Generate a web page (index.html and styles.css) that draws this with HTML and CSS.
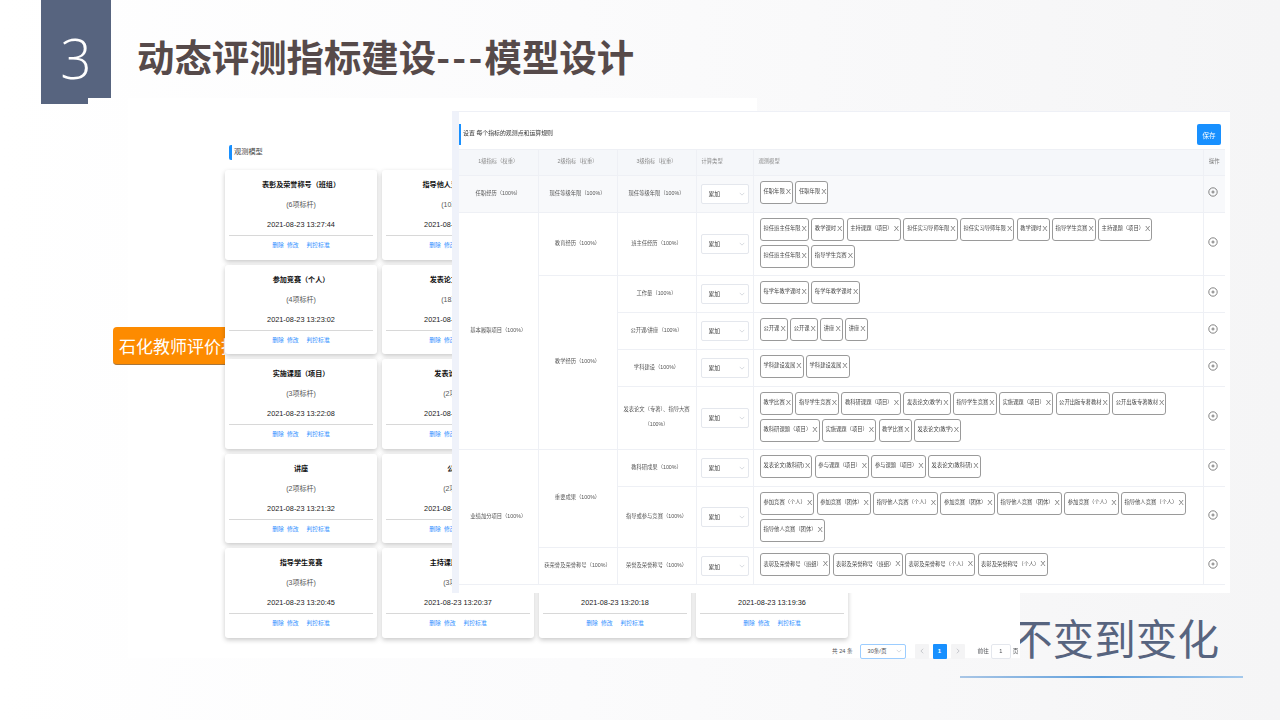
FILE: index.html
```html
<!DOCTYPE html>
<html lang="zh-CN">
<head>
<meta charset="utf-8">
<title>动态评测指标建设---模型设计</title>
<link rel="stylesheet" href="styles.css">
</head>
<body>
<main class="slide">
  <header class="slide-head">
    <div class="badge">3</div>
    <h1 class="slide-title">动态评测指标建设<span class="dashes">---</span>模型设计</h1>
  </header>

  <div class="caption">不变到变化</div>
  <div class="rule"></div>
  <div class="backdrop"></div>
  <div class="callout">石化教师评价指标</div>

  <section class="screen">
    <div class="screen-head">观测模型</div>
    <div class="cards">
      <article class="card"><h3>表彰及荣誉称号（班组）</h3><p class="num">(6项标杆)</p><p class="date">2021-08-23 13:27:44</p><div class="links"><a>删除</a><a>修改</a><a class="far">判控标准</a></div></article>
      <article class="card"><h3>指导他人竞赛（个人）</h3><p class="num">(10项标杆)</p><p class="date">2021-08-23 13:27:30</p><div class="links"><a>删除</a><a>修改</a><a class="far">判控标准</a></div></article>
      <article class="card"></article>
      <article class="card"></article>

      <article class="card"><h3>参加竞赛（个人）</h3><p class="num">(4项标杆)</p><p class="date">2021-08-23 13:23:02</p><div class="links"><a>删除</a><a>修改</a><a class="far">判控标准</a></div></article>
      <article class="card"><h3>发表论文（教学）</h3><p class="num">(18项标杆)</p><p class="date">2021-08-23 13:22:40</p><div class="links"><a>删除</a><a>修改</a><a class="far">判控标准</a></div></article>
      <article class="card"></article>
      <article class="card"></article>

      <article class="card"><h3>实施课题（项目）</h3><p class="num">(3项标杆)</p><p class="date">2021-08-23 13:22:08</p><div class="links"><a>删除</a><a>修改</a><a class="far">判控标准</a></div></article>
      <article class="card"><h3>发表论文(教学)</h3><p class="num">(2项标杆)</p><p class="date">2021-08-23 13:21:50</p><div class="links"><a>删除</a><a>修改</a><a class="far">判控标准</a></div></article>
      <article class="card"></article>
      <article class="card"></article>

      <article class="card"><h3>讲座</h3><p class="num">(2项标杆)</p><p class="date">2021-08-23 13:21:32</p><div class="links"><a>删除</a><a>修改</a><a class="far">判控标准</a></div></article>
      <article class="card"><h3>公开课</h3><p class="num">(2项标杆)</p><p class="date">2021-08-23 13:21:10</p><div class="links"><a>删除</a><a>修改</a><a class="far">判控标准</a></div></article>
      <article class="card"></article>
      <article class="card"></article>

      <article class="card"><h3>指导学生竞赛</h3><p class="num">(3项标杆)</p><p class="date">2021-08-23 13:20:45</p><div class="links"><a>删除</a><a>修改</a><a class="far">判控标准</a></div></article>
      <article class="card"><h3>主持课题（项目）</h3><p class="num">(3项标杆)</p><p class="date">2021-08-23 13:20:37</p><div class="links"><a>删除</a><a>修改</a><a class="far">判控标准</a></div></article>
      <article class="card"><h3>&nbsp;</h3><p class="num">&nbsp;</p><p class="date">2021-08-23 13:20:18</p><div class="links"><a>删除</a><a>修改</a><a class="far">判控标准</a></div></article>
      <article class="card"><h3>&nbsp;</h3><p class="num">&nbsp;</p><p class="date">2021-08-23 13:19:36</p><div class="links"><a>删除</a><a>修改</a><a class="far">判控标准</a></div></article>
    </div>
    <nav class="pager">
      <span class="total">共 24 条</span>
      <span class="size">30条/页<svg class="chev" viewBox="0 0 8 5"><path d="M1 1l3 3 3-3"/></svg></span>
      <span class="page-btn"><svg class="arrow" viewBox="0 0 5 8"><path d="M4 1L1 4l3 3"/></svg></span>
      <span class="page-btn current">1</span>
      <span class="page-btn"><svg class="arrow" viewBox="0 0 5 8"><path d="M1 1l3 3-3 3"/></svg></span>
      <span class="goto">前往</span>
      <span class="goto-input">1</span>
      <span class="goto-end">页</span>
    </nav>
  </section>

  <section class="panel">
    <div class="panel-head">
      <h2 class="panel-title">设置 每个指标的观测点和运算规则</h2>
      <button class="save">保存</button>
    </div>
    <table class="rules">
      <colgroup><col class="c1"><col class="c2"><col class="c3"><col class="c4"><col class="c5"><col class="c6"></colgroup>
      <thead>
        <tr><th>1级指标（权重）</th><th>2级指标（权重）</th><th>3级指标（权重）</th><th class="left">计算类型</th><th class="left">观测模型</th><th class="op-h">操作</th></tr>
      </thead>
      <tbody>
        <tr class="tint h37">
          <td>任职经历（100%）</td><td>现任等级年限（100%）</td><td>现任等级年限（100%）</td>
          <td class="sel"><span class="select">累加<svg class="chev" viewBox="0 0 8 5"><path d="M1 1l3 3 3-3"/></svg></span></td>
          <td class="tags"><div class="tag-list"><span class="tag">任职年限<i>X</i></span><span class="tag">任职年限<i>X</i></span></div></td>
          <td class="op"><svg class="add" viewBox="0 0 10 10"><circle cx="5" cy="5" r="4.2"/><path d="M5 3.4v3.2M3.4 5h3.2"/></svg></td>
        </tr>
        <tr class="h63">
          <td rowspan="5">基本履职项目（100%）</td><td>教育经历（100%）</td><td>班主任经历（100%）</td>
          <td class="sel"><span class="select">累加<svg class="chev" viewBox="0 0 8 5"><path d="M1 1l3 3 3-3"/></svg></span></td>
          <td class="tags"><div class="tag-list"><span class="tag">担任班主任年限<i>X</i></span><span class="tag">教学课时<i>X</i></span><span class="tag">主持课题（项目）<i>X</i></span><span class="tag">担任实习导师年限<i>X</i></span><span class="tag">担任实习导师年限<i>X</i></span><span class="tag">教学课时<i>X</i></span><span class="tag">指导学生竞赛<i>X</i></span><span class="tag">主持课题（项目）<i>X</i></span><span class="tag">担任班主任年限<i>X</i></span><span class="tag">指导学生竞赛<i>X</i></span></div></td>
          <td class="op"><svg class="add" viewBox="0 0 10 10"><circle cx="5" cy="5" r="4.2"/><path d="M5 3.4v3.2M3.4 5h3.2"/></svg></td>
        </tr>
        <tr class="h37">
          <td rowspan="4">教学经历（100%）</td><td>工作量（100%）</td>
          <td class="sel"><span class="select">累加<svg class="chev" viewBox="0 0 8 5"><path d="M1 1l3 3 3-3"/></svg></span></td>
          <td class="tags"><div class="tag-list"><span class="tag">每学年教学课时<i>X</i></span><span class="tag">每学年教学课时<i>X</i></span></div></td>
          <td class="op"><svg class="add" viewBox="0 0 10 10"><circle cx="5" cy="5" r="4.2"/><path d="M5 3.4v3.2M3.4 5h3.2"/></svg></td>
        </tr>
        <tr class="h37">
          <td>公开课/讲座（100%）</td>
          <td class="sel"><span class="select">累加<svg class="chev" viewBox="0 0 8 5"><path d="M1 1l3 3 3-3"/></svg></span></td>
          <td class="tags"><div class="tag-list"><span class="tag">公开课<i>X</i></span><span class="tag">公开课<i>X</i></span><span class="tag">讲座<i>X</i></span><span class="tag">讲座<i>X</i></span></div></td>
          <td class="op"><svg class="add" viewBox="0 0 10 10"><circle cx="5" cy="5" r="4.2"/><path d="M5 3.4v3.2M3.4 5h3.2"/></svg></td>
        </tr>
        <tr class="h37">
          <td>学科建设（100%）</td>
          <td class="sel"><span class="select">累加<svg class="chev" viewBox="0 0 8 5"><path d="M1 1l3 3 3-3"/></svg></span></td>
          <td class="tags"><div class="tag-list"><span class="tag">学科建设发展<i>X</i></span><span class="tag">学科建设发展<i>X</i></span></div></td>
          <td class="op"><svg class="add" viewBox="0 0 10 10"><circle cx="5" cy="5" r="4.2"/><path d="M5 3.4v3.2M3.4 5h3.2"/></svg></td>
        </tr>
        <tr class="h63">
          <td class="wrap">发表论文（专著）、指导大赛<br>（100%）</td>
          <td class="sel"><span class="select">累加<svg class="chev" viewBox="0 0 8 5"><path d="M1 1l3 3 3-3"/></svg></span></td>
          <td class="tags"><div class="tag-list"><span class="tag">教学比赛<i>X</i></span><span class="tag">指导学生竞赛<i>X</i></span><span class="tag">教科研课题（项目）<i>X</i></span><span class="tag">发表论文(教学)<i>X</i></span><span class="tag">指导学生竞赛<i>X</i></span><span class="tag">实施课题（项目）<i>X</i></span><span class="tag">公开出版专著教材<i>X</i></span><span class="tag">公开出版专著教材<i>X</i></span><span class="tag">教科研课题（项目）<i>X</i></span><span class="tag">实施课题（项目）<i>X</i></span><span class="tag">教学比赛<i>X</i></span><span class="tag">发表论文(教学)<i>X</i></span></div></td>
          <td class="op"><svg class="add" viewBox="0 0 10 10"><circle cx="5" cy="5" r="4.2"/><path d="M5 3.4v3.2M3.4 5h3.2"/></svg></td>
        </tr>
        <tr class="h37">
          <td rowspan="3">业绩加分项目（100%）</td><td rowspan="2">重要成果（100%）</td><td>教科研成果（100%）</td>
          <td class="sel"><span class="select">累加<svg class="chev" viewBox="0 0 8 5"><path d="M1 1l3 3 3-3"/></svg></span></td>
          <td class="tags"><div class="tag-list"><span class="tag">发表论文(教科研)<i>X</i></span><span class="tag">参与课题（项目）<i>X</i></span><span class="tag">参与课题（项目）<i>X</i></span><span class="tag">发表论文(教科研)<i>X</i></span></div></td>
          <td class="op"><svg class="add" viewBox="0 0 10 10"><circle cx="5" cy="5" r="4.2"/><path d="M5 3.4v3.2M3.4 5h3.2"/></svg></td>
        </tr>
        <tr class="h62">
          <td>指导或参与竞赛（100%）</td>
          <td class="sel"><span class="select">累加<svg class="chev" viewBox="0 0 8 5"><path d="M1 1l3 3 3-3"/></svg></span></td>
          <td class="tags"><div class="tag-list"><span class="tag">参加竞赛（个人）<i>X</i></span><span class="tag">参加竞赛（团体）<i>X</i></span><span class="tag">指导他人竞赛（个人）<i>X</i></span><span class="tag">参加竞赛（团体）<i>X</i></span><span class="tag">指导他人竞赛（团体）<i>X</i></span><span class="tag">参加竞赛（个人）<i>X</i></span><span class="tag">指导他人竞赛（个人）<i>X</i></span><span class="tag">指导他人竞赛（团体）<i>X</i></span></div></td>
          <td class="op"><svg class="add" viewBox="0 0 10 10"><circle cx="5" cy="5" r="4.2"/><path d="M5 3.4v3.2M3.4 5h3.2"/></svg></td>
        </tr>
        <tr class="h37">
          <td>获荣誉及荣誉称号（100%）</td><td>荣誉及荣誉称号（100%）</td>
          <td class="sel"><span class="select">累加<svg class="chev" viewBox="0 0 8 5"><path d="M1 1l3 3 3-3"/></svg></span></td>
          <td class="tags"><div class="tag-list"><span class="tag">表彰及荣誉称号（班组）<i>X</i></span><span class="tag">表彰及荣誉称号（班组）<i>X</i></span><span class="tag">表彰及荣誉称号（个人）<i>X</i></span><span class="tag">表彰及荣誉称号（个人）<i>X</i></span></div></td>
          <td class="op"><svg class="add" viewBox="0 0 10 10"><circle cx="5" cy="5" r="4.2"/><path d="M5 3.4v3.2M3.4 5h3.2"/></svg></td>
        </tr>
      </tbody>
    </table>
  </section>
</main>
</body>
</html>
```

FILE: styles.css
```css
* { box-sizing: border-box; }
html, body { margin: 0; padding: 0; }
body { font-family: "Liberation Sans", "Noto Sans CJK SC", sans-serif; }
h1, h2, h3, p { margin: 0; font-weight: inherit; font-size: inherit; }

.slide {
  position: relative;
  width: 1280px;
  height: 720px;
  overflow: hidden;
  background: linear-gradient(90deg, #ffffff 0%, #fbfbfc 45%, #f5f5f6 100%);
}

/* slide header */
.slide-head { display: flex; align-items: flex-start; padding-left: 41px; }
.badge {
  position: relative;
  width: 70px;
  height: 98px;
  background: #57647f;
  color: #fff;
  font: 300 55px/115px "Open Sans", sans-serif;
  text-align: center;
}
.badge::after {
  content: "";
  position: absolute;
  left: 0;
  top: 98px;
  width: 47px;
  height: 6px;
  background: #57647f;
}
.slide-title {
  margin: 31px 0 0 26px;
  font: 700 37.4px/50px "Noto Sans CJK SC", sans-serif;
  color: #564a4a;
  white-space: nowrap;
}
.dashes { letter-spacing: 2.3px; }

/* slide objects on the free canvas */
.caption {
  position: absolute;
  left: 1011px;
  top: 614px;
  font: 400 41.6px/46px "Noto Sans CJK SC", sans-serif;
  color: #57647f;
  white-space: nowrap;
}
.rule {
  position: absolute;
  left: 960px;
  top: 676px;
  width: 283px;
  height: 2px;
  background: linear-gradient(90deg, #a9c6e6, #5f9fdc 50%, #a3c8ec);
}
.backdrop {
  position: absolute;
  left: 128px;
  top: 98px;
  width: 629px;
  height: 560px;
  background: #fff;
}
.callout {
  position: absolute;
  left: 113px;
  top: 327px;
  width: 130px;
  height: 38px;
  padding-left: 6px;
  overflow: hidden;
  white-space: nowrap;
  background: #fd8b00;
  border-bottom: 1px solid #a8763c;
  border-radius: 4px;
  color: #fff;
  font: 400 17px/38px "Noto Sans CJK SC", sans-serif;
}

/* cards screenshot */
.screen {
  position: absolute;
  left: 225px;
  top: 111px;
  width: 795px;
  height: 547px;
  padding-top: 34px;
  background: #fff;
  filter: blur(.35px);
}
.screen-head {
  height: 15px;
  margin-left: 4px;
  padding-left: 2px;
  border-left: 3px solid #1890ff;
  border-radius: 2px;
  font-size: 7.2px;
  line-height: 14px;
  color: #444;
}
.cards {
  display: grid;
  grid-template-columns: repeat(4, 152px);
  grid-auto-rows: 89.5px;
  gap: 5px;
  margin-top: 10px;
}
.card {
  padding: 5px 4px 0;
  background: #fff;
  border-radius: 3px;
  box-shadow: 0 2px 5px rgba(0, 0, 0, .22);
  text-align: center;
  white-space: nowrap;
}
.card h3 { font-size: 7.1px; line-height: 20px; font-weight: 700; color: #111; }
.num { font-size: 7px; line-height: 20px; color: #555; }
.date { font-size: 7.3px; line-height: 20px; color: #222; border-bottom: 1px solid #d8d8d8; }
.links { display: flex; justify-content: center; gap: 3px; font-size: 5.8px; line-height: 18px; color: #2f8fff; }
.links .far { margin-left: 5px; }

.pager {
  display: flex;
  align-items: center;
  height: 15px;
  margin-top: 6px;
  padding-left: 607px;
  font-size: 5.6px;
  color: #505256;
  white-space: nowrap;
}
.size {
  display: flex;
  align-items: center;
  justify-content: space-between;
  width: 46px;
  height: 15px;
  margin-left: 7px;
  padding: 0 3px 0 7px;
  border: 1px solid #9ccdff;
  border-radius: 2px;
}
.page-btn {
  display: flex;
  align-items: center;
  justify-content: center;
  width: 14px;
  height: 15px;
  margin-left: 4px;
  background: #f4f4f5;
  border-radius: 1px;
  font-weight: 700;
  font-size: 6px;
}
.size + .page-btn { margin-left: 9px; }
.page-btn.current { background: #1890ff; color: #fff; }
.arrow { width: 4px; height: 6px; fill: none; stroke: #b5b8bd; stroke-width: 1; }
.goto { margin-left: 13px; }
.goto-input {
  width: 20px;
  height: 15px;
  margin-left: 2px;
  border: 1px solid #e4e7ed;
  border-radius: 2px;
  text-align: center;
  line-height: 13px;
}
.goto-end { margin-left: 2px; }

/* rules panel */
.panel {
  position: absolute;
  left: 452px;
  top: 111px;
  width: 778px;
  height: 482px;
  padding: 12px 5px 0 0;
  background: #fff;
  border-left: 7px solid #eff2fa;
  border-top: 1px solid #eef0f6;
  filter: blur(.35px);
}
.panel-head {
  display: flex;
  justify-content: space-between;
  height: 21px;
  margin-bottom: 4px;
  padding-right: 4px;
  border-left: 2px solid #1890ff;
}
.panel-title { padding-left: 2px; font-size: 5.9px; line-height: 19px; color: #333; }
.save {
  width: 24px;
  height: 21px;
  padding: 0;
  background: #1890ff;
  border: 0;
  border-radius: 2px;
  color: #fff;
  font: inherit;
  font-size: 6.5px;
}
.rules {
  width: 766px;
  table-layout: fixed;
  border-collapse: collapse;
  font-size: 5.3px;
  color: #555;
  text-align: center;
}
.c1, .c2, .c3 { width: 79px; }
.c4 { width: 57px; }
.c5 { width: 450px; }
.c6 { width: 22px; }
.rules th, .rules td { padding: 0 0 2px; border: 1px solid #eef0f5; }
.rules th { height: 25.5px; background: #f5f7fa; font-weight: 400; color: #888; }
.rules th.left { text-align: left; padding-left: 5px; }
.rules th.op-h { color: #777; }
.rules thead th, .rules tr > :first-child { border-left: 0; }
.rules tr > :last-child { border-right: 0; }
.rules td.wrap { line-height: 15px; }
.tint td { background: #f8f9fb; }
.h37 { height: 37px; }
.h63 { height: 63px; }
.h62 { height: 61.5px; }
.rules .sel { padding: 0 4px; }
.select {
  display: flex;
  align-items: center;
  justify-content: space-between;
  height: 20px;
  padding: 0 3px 0 7px;
  background: #fff;
  border: 1px solid #e4e7ed;
  border-radius: 2px;
  font-size: 5.8px;
  color: #444;
}
.chev { width: 6px; height: 4px; fill: none; stroke: #c0c4cc; stroke-width: .8; }
.rules .tags { padding: 5px 0 1.5px 6.5px; vertical-align: top; text-align: left; }
.tag-list { display: flex; flex-wrap: wrap; gap: 4px 2.4px; }
.tag {
  display: inline-flex;
  align-items: center;
  height: 23px;
  padding: 0 1px 2px 2.5px;
  background: #fff;
  border: 1px solid #9a9a9a;
  border-radius: 3px;
  color: #444;
  white-space: nowrap;
}
.tag i { margin-left: 1px; font-style: normal; font-size: 8px; color: #777; }
.rules .op { padding: 0 2px 4px 0; }
.add { display: block; width: 10px; height: 10px; margin: 0 auto; fill: none; stroke: #666; stroke-width: .8; }
```
